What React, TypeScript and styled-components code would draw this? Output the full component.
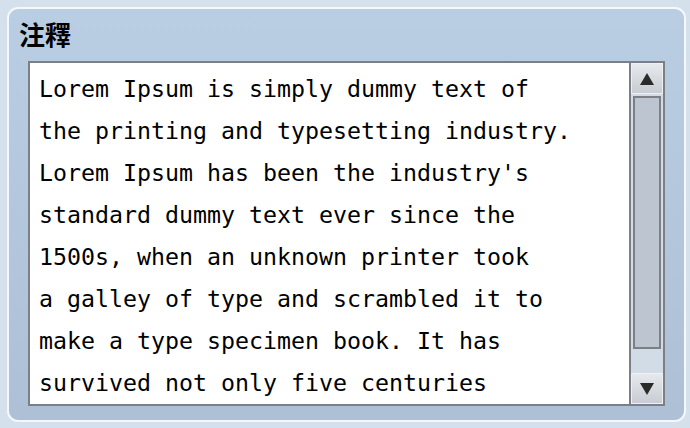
import React from "react";
import styled, { createGlobalStyle } from "styled-components";

const Global = createGlobalStyle`
  html, body { margin: 0; padding: 0; background: #d5e0ed; }
  #root { width: 690px; height: 428px; }
`;

const Page = styled.div`
  box-sizing: border-box;
  width: 690px;
  height: 428px;
  padding: 7px 4px 6px 7px;
  background: #d5e0ed;
`;

const Panel = styled.section`
  box-sizing: border-box;
  height: 100%;
  border: 2px solid #f4f7fb;
  border-radius: 11px;
  background: linear-gradient(#bacee3, #adc0d6);
  display: flex;
  flex-direction: column;
  padding: 0 19px 14px 19px;
`;

const Title = styled.h2`
  box-sizing: border-box;
  margin: 0 0 0 -9px;
  height: 52px;
  padding-top: 10px;
  font-family: "Noto Sans CJK TC", "Noto Sans CJK SC", sans-serif;
  font-weight: 700;
  font-size: 26px;
  line-height: 30px;
  color: #000;
`;

const Box = styled.div`
  flex: 1;
  display: flex;
  border: 2px solid #7c8086;
  background: #fff;
  min-height: 0;
`;

const Text = styled.div`
  flex: 1;
  padding: 5px 10px 0 9px;
  overflow: hidden;
  font-family: "DejaVu Sans Mono", monospace;
  font-size: 23.25px;
  line-height: 42px;
  color: #000;
  white-space: pre;
`;

const Scrollbar = styled.div`
  width: 32px;
  border-left: 2px solid #7c8086;
  background: #d2dce7;
  display: flex;
  flex-direction: column;
  gap: 2px;
`;

const ArrowButton = styled.div`
  box-sizing: border-box;
  height: 31px;
  border: 1px solid #eef1f4;
  background: linear-gradient(#e6e9ec, #c8cdd3);
  display: flex;
  align-items: center;
  justify-content: center;
`;

const Thumb = styled.div`
  box-sizing: border-box;
  margin: 0 2px;
  height: 253px;
  border: 2px solid #7c8086;
  background: #bcc5d0;
`;

const Spacer = styled.div`
  flex: 1;
`;

const Arrow = ({ down }: { down?: boolean }) => (
  <svg width="16" height="14" viewBox="0 0 16 14">
    <polygon
      points={down ? "1,1 15,1 8,13" : "1,13 15,13 8,1"}
      fill="#2b2b2b"
    />
  </svg>
);

const lines = [
  "Lorem Ipsum is simply dummy text of",
  "the printing and typesetting industry.",
  "Lorem Ipsum has been the industry's",
  "standard dummy text ever since the",
  "1500s, when an unknown printer took",
  "a galley of type and scrambled it to",
  "make a type specimen book. It has",
  "survived not only five centuries",
];

export default function App() {
  return (
    <>
      <Global />
      <Page>
        <Panel>
          <Title>注釋</Title>
          <Box>
            <Text>{lines.join("\n")}</Text>
            <Scrollbar>
              <ArrowButton>
                <Arrow />
              </ArrowButton>
              <Thumb />
              <Spacer />
              <ArrowButton>
                <Arrow down />
              </ArrowButton>
            </Scrollbar>
          </Box>
        </Panel>
      </Page>
    </>
  );
}
